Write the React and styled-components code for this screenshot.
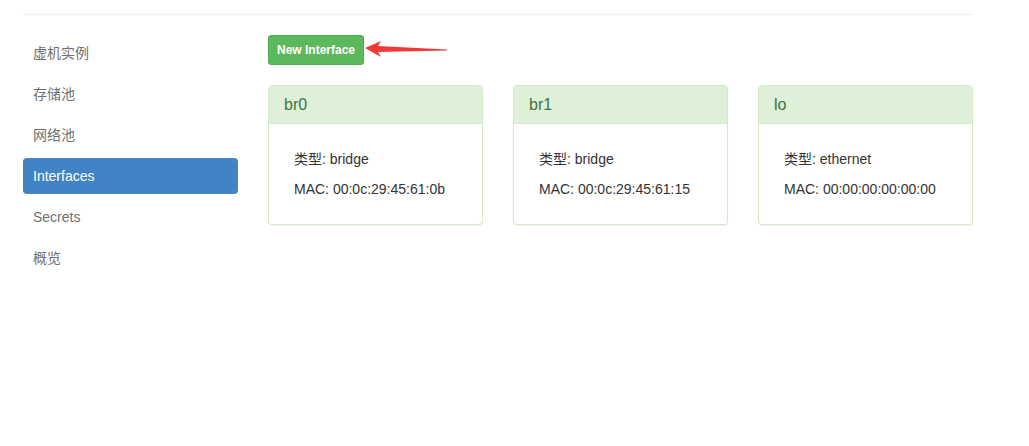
import React from "react";
import styled, { createGlobalStyle } from "styled-components";

const Global = createGlobalStyle`
  html, body { margin: 0; padding: 0; background: #fff; }
  body {
    font-family: "Liberation Sans", Arial, "Noto Sans CJK SC", sans-serif;
    font-size: 14px;
    line-height: 20px;
    color: #333;
  }
`;

const Page = styled.div`
  width: 950px;
  padding: 14px 0 0 23px;
`;

const Divider = styled.hr`
  margin: 0 0 20px;
  border: 0;
  border-top: 1px solid #eeeeee;
`;

const Layout = styled.div`
  display: flex;
  gap: 30px;
  align-items: flex-start;
`;

const Sidebar = styled.nav`
  width: 215px;
  flex: none;
  display: flex;
  flex-direction: column;
  gap: 5px;
`;

const NavItem = styled.a`
  display: block;
  height: 36px;
  box-sizing: border-box;
  padding: 8px 10px;
  border-radius: 4px;
  font-size: 14px;
  line-height: 20px;
  text-decoration: none;
  cursor: pointer;
  color: ${(p) => (p.$active ? "#fff" : "#6f6f6f")};
  background: ${(p) => (p.$active ? "#4183c4" : "transparent")};
`;

const Main = styled.main`
  flex: 1;
  min-width: 0;
`;

const Toolbar = styled.div`
  position: relative;
  display: flex;
  margin-bottom: 20px;
`;

const Button = styled.button`
  height: 30px;
  box-sizing: border-box;
  padding: 5px 8px;
  font-family: inherit;
  font-size: 12px;
  font-weight: bold;
  line-height: 18px;
  color: #fff;
  background: #5cb85c;
  border: 1px solid #4cae4c;
  border-radius: 3px;
  cursor: pointer;
`;

const Arrow = styled.svg`
  position: absolute;
  left: 96px;
  top: 5px;
  overflow: visible;
`;

const Cards = styled.div`
  display: grid;
  grid-template-columns: repeat(3, 1fr);
  gap: 30px;
`;

const Card = styled.section`
  border: 1px solid #d6e9c6;
  border-radius: 4px;
  background: #fff;
  box-shadow: 0 1px 1px rgba(0, 0, 0, 0.05);
  overflow: hidden;
`;

const CardHeader = styled.div`
  background: #dff0d8;
  border-bottom: 1px solid #d6e9c6;
  padding: 10px 15px;
  height: 38px;
  box-sizing: border-box;
  color: #3c763d;
  font-size: 16px;
  line-height: 17px;
`;

const CardBody = styled.div`
  padding: 25px 25px 25px;
  display: flex;
  flex-direction: column;
  gap: 10px;
`;

const Line = styled.div`
  font-size: 14px;
  line-height: 20px;
  color: #333;
  white-space: nowrap;
`;

const navItems = ["虚机实例", "存储池", "网络池", "Interfaces", "Secrets", "概览"];

const interfaces = [
  { name: "br0", type: "bridge", mac: "00:0c:29:45:61:0b" },
  { name: "br1", type: "bridge", mac: "00:0c:29:45:61:15" },
  { name: "lo", type: "ethernet", mac: "00:00:00:00:00:00" },
];

export default function App() {
  return (
    <>
      <Global />
      <Page>
        <Divider />
        <Layout>
          <Sidebar>
            {navItems.map((n) => (
              <NavItem key={n} $active={n === "Interfaces"}>
                {n}
              </NavItem>
            ))}
          </Sidebar>
          <Main>
            <Toolbar>
              <Button>New Interface</Button>
              <Arrow width="84" height="18" viewBox="0 0 84 18">
                <polygon
                  points="1,8 17,1 14,6 83,9.5 83,10.5 14,12 17,17"
                  fill="#f03a3a"
                />
              </Arrow>
            </Toolbar>
            <Cards>
              {interfaces.map((it) => (
                <Card key={it.name}>
                  <CardHeader>{it.name}</CardHeader>
                  <CardBody>
                    <Line>类型: {it.type}</Line>
                    <Line>MAC: {it.mac}</Line>
                  </CardBody>
                </Card>
              ))}
            </Cards>
          </Main>
        </Layout>
      </Page>
    </>
  );
}
